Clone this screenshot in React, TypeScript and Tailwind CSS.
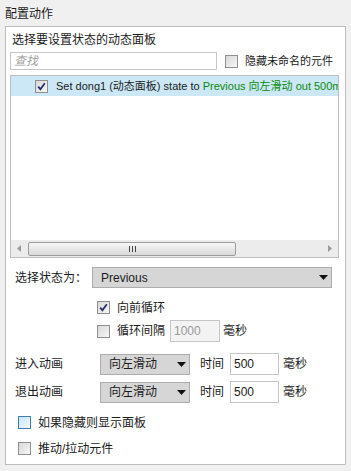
import React from "react";

function Check({ checked = false, hover = false }: { checked?: boolean; hover?: boolean }) {
  return (
    <span
      className={
        "relative flex h-[13px] w-[13px] shrink-0 items-center justify-center border " +
        (hover
          ? "border-[#3c7fb1] bg-gradient-to-br from-[#c9e5f7] to-[#f0f8fe]"
          : "border-[#8f8f8f] bg-gradient-to-br from-[#d8d8d8] to-[#f7f7f7]")
      }
    >
      {checked && (
        <svg width="9" height="9" viewBox="0 0 9 9">
          <path d="M1.2 4.6 L3.4 7.2 L7.8 1.2" fill="none" stroke="#262f6a" strokeWidth="1.8" />
        </svg>
      )}
    </span>
  );
}

function Caret() {
  return (
    <svg width="9" height="5" viewBox="0 0 9 5" className="shrink-0">
      <path d="M0 0 H9 L4.5 5 Z" fill="#111" />
    </svg>
  );
}

function Select({ value, className }: { value: string; className: string }) {
  return (
    <div
      className={
        "flex h-[21px] items-center justify-between border border-[#adadad] bg-[#d6d6d6] pr-[3px] " +
        className
      }
    >
      <span>{value}</span>
      <Caret />
    </div>
  );
}

function Field({ value, disabled = false, className }: { value: string; disabled?: boolean; className: string }) {
  return (
    <div
      className={
        "flex h-[22px] items-center border border-[#c6c6c6] pl-[3px] " +
        (disabled ? "bg-[#f3f3f3] text-[#999]" : "bg-white") +
        " " +
        className
      }
    >
      {value}
    </div>
  );
}

export default function App() {
  return (
    <div
      className="h-[471px] w-[351px] overflow-hidden bg-[#f0f0f0] text-[12px] leading-4 text-[#1b1b1b]"
      style={{ fontFamily: '"Liberation Sans", "Noto Sans CJK SC", sans-serif' }}
    >
      <div className="flex h-[26px] items-center pl-[5px] pt-[1px]">配置动作</div>

      <div className="mx-[5px] h-[439px] border border-[#bdbdbd] bg-white px-[4px]">
        <div className="pl-[2px] pt-[5px]">选择要设置状态的动态面板</div>

        <div className="mt-[4px] flex h-[18px] items-center">
          <div className="flex h-[18px] w-[207px] items-center border border-[#c6c6c6] pl-[3px] italic text-[#a0a0a0]">
            查找
          </div>
          <span className="ml-[8px]">
            <Check />
          </span>
          <span className="ml-[7px] text-[11px]">隐藏未命名的元件</span>
        </div>

        <div className="mt-[5px] flex h-[183px] w-[329px] flex-col border border-[#bdbdbd]">
          <div className="flex h-[20px] items-center overflow-hidden whitespace-nowrap bg-[#cce8f6] pl-[24px] text-[11px]">
            <Check checked />
            <span className="ml-[8px]">
              Set dong1 (动态面板) state to{" "}
              <span className="text-[#0a8a0a]">Previous 向左滑动 out 500ms</span>
            </span>
          </div>
          <div className="flex-1" />
          <div className="flex h-[17px] items-center bg-[#ececec] px-[6px]">
            <svg width="4" height="7" viewBox="0 0 4 7" className="shrink-0">
              <path d="M4 0 V7 L0 3.5 Z" fill="#9a9a9a" />
            </svg>
            <div className="ml-[7px] flex h-[14px] w-[208px] items-center justify-center rounded-[2px] border border-[#9c9c9c] bg-gradient-to-b from-[#f6f6f6] to-[#d9d9d9]">
              <svg width="7" height="6" viewBox="0 0 7 6">
                <path d="M0.5 0 V6 M3.5 0 V6 M6.5 0 V6" stroke="#444" strokeWidth="1" />
              </svg>
            </div>
            <div className="flex-1" />
            <svg width="4" height="7" viewBox="0 0 4 7" className="shrink-0">
              <path d="M0 0 V7 L4 3.5 Z" fill="#9a9a9a" />
            </svg>
          </div>
        </div>

        <div className="mt-[9px] flex items-center">
          <span className="w-[82px] pl-[5px]">选择状态为：</span>
          <Select value="Previous" className="w-[240px] pl-[8px]" />
        </div>

        <div className="mt-[13px] flex h-[13px] items-center pl-[87px]">
          <Check checked />
          <span className="ml-[7px]">向前循环</span>
        </div>

        <div className="mt-[6px] flex h-[22px] items-center pl-[87px]">
          <Check />
          <span className="ml-[7px]">循环间隔</span>
          <Field value="1000" disabled className="ml-[5px] w-[50px]" />
          <span className="ml-[3px]">毫秒</span>
        </div>

        <div className="mt-[11px] flex items-center">
          <span className="w-[90px] pl-[5px]">进入动画</span>
          <Select value="向左滑动" className="w-[90px] pl-[8px]" />
          <span className="ml-[10px]">时间</span>
          <Field value="500" className="ml-[6px] w-[49px]" />
          <span className="ml-[4px]">毫秒</span>
        </div>

        <div className="mt-[6px] flex items-center">
          <span className="w-[90px] pl-[5px]">退出动画</span>
          <Select value="向左滑动" className="w-[90px] pl-[8px]" />
          <span className="ml-[10px]">时间</span>
          <Field value="500" className="ml-[6px] w-[49px]" />
          <span className="ml-[4px]">毫秒</span>
        </div>

        <div className="mt-[13px] flex h-[13px] items-center pl-[8px]">
          <Check hover />
          <span className="ml-[7px]">如果隐藏则显示面板</span>
        </div>

        <div className="mt-[13px] flex h-[13px] items-center pl-[8px]">
          <Check />
          <span className="ml-[7px]">推动/拉动元件</span>
        </div>
      </div>
    </div>
  );
}
